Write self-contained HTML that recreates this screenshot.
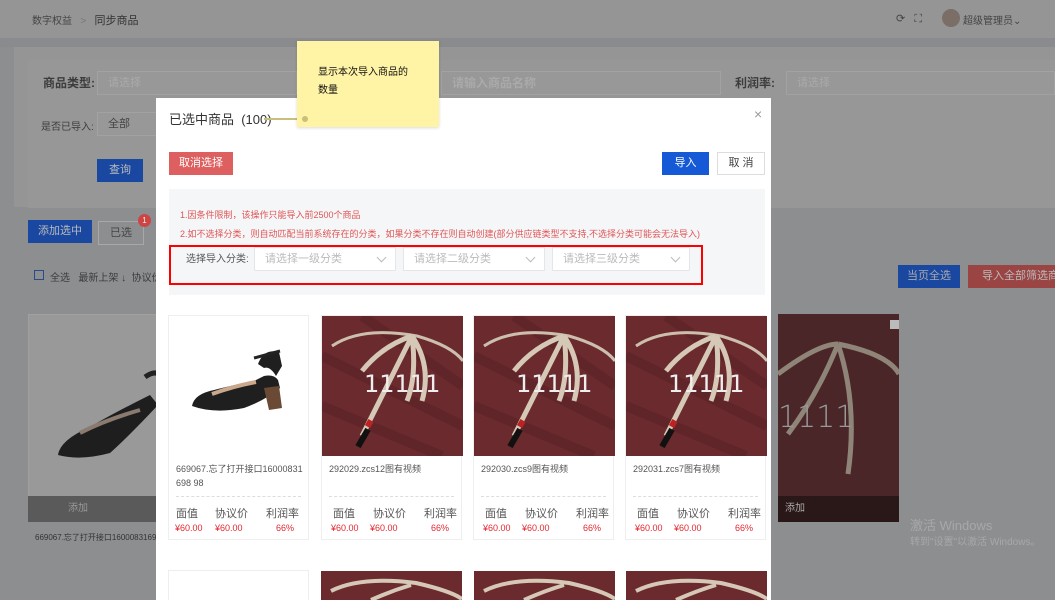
<!DOCTYPE html>
<html><head><meta charset="utf-8"><style>
*{box-sizing:border-box;margin:0;padding:0}
body{width:1055px;height:616px;overflow:hidden;background:#fff;font-family:"Liberation Sans","Noto Sans CJK SC",sans-serif;position:relative;font-size:12px}
.a{position:absolute;white-space:nowrap}
.ov{left:0;top:0;width:1055px;height:600px;background:#8d8e90}
.hd{left:0;top:0;width:1055px;height:38px;background:#959595}
.inp{background:#989898;border:1px solid #a2a2a2;color:#aaa;font-size:11px;padding-left:10px;line-height:22px}
.g{color:#3c3c3c}
.modal{left:156px;top:98px;width:615px;height:502px;background:#fff;overflow:hidden}
.btn{text-align:center;color:#fff;font-size:11px;line-height:23px}
.sel{background:#fff;border:1px solid #e4e6ea;color:#bbb;font-size:11px;line-height:22px;padding-left:10px;height:24px}
.sel:after{content:"";position:absolute;right:10px;top:6px;width:6px;height:6px;border-right:1px solid #bbb;border-bottom:1px solid #bbb;transform:rotate(45deg)}
.card{width:141px;height:225px;border:1px solid #eee;background:#fff}
.card .t{position:absolute;left:7px;top:146px;width:128px;font-size:9px;color:#555;line-height:14px;word-break:break-all;white-space:normal}
.card .dl{position:absolute;left:7px;right:7px;top:180px;border-top:1px dashed #ddd}
.card .l{position:absolute;top:189px;font-size:11px;color:#555}
.card .p{position:absolute;top:207px;font-size:9px;color:#e3262f}
</style></head><body>
<div class="a ov"></div>
<div class="a hd"></div>
<div class="a" style="left:32px;top:12px;font-size:10px;color:#444">数字权益 &nbsp;&nbsp;<span style="color:#777">&gt;</span>&nbsp;&nbsp; <span style="font-size:11px;color:#333">同步商品</span></div>
<div class="a" style="left:896px;top:12px;font-size:11px;color:#444">⟳ &nbsp;&nbsp;⛶</div>
<div class="a" style="left:942px;top:9px;width:18px;height:18px;border-radius:50%;background:#7a6e66"></div>
<div class="a" style="left:963px;top:12px;font-size:10px;color:#444">超级管理员⌄</div>
<div class="a" style="left:0;top:38px;width:1055px;height:9px;background:#8a8b8e"></div>
<div class="a" style="left:14px;top:47px;width:1041px;height:160px;background:#959595"></div>
<div class="a" style="left:28px;top:60px;width:1027px;height:148px;background:#979797"></div>
<div class="a g" style="left:43px;top:74px;font-size:12px;font-weight:bold">商品类型:</div>
<div class="a inp" style="left:97px;top:71px;width:200px;height:24px">请选择</div>
<div class="a inp" style="left:441px;top:71px;width:280px;height:24px;font-size:12px;font-weight:bold;color:#aaa">请输入商品名称</div>
<div class="a g" style="left:735px;top:74px;font-weight:bold">利润率:</div>
<div class="a inp" style="left:786px;top:71px;width:269px;height:24px">请选择</div>
<div class="a g" style="left:41px;top:118px;font-size:10px">是否已导入:</div>
<div class="a inp" style="left:97px;top:112px;width:70px;height:24px;color:#444">全部</div>
<div class="a btn" style="left:97px;top:159px;width:46px;background:#1a48a0;color:#bbb">查询</div>
<div class="a btn" style="left:28px;top:220px;width:64px;background:#1a48a0;color:#bbb">添加选中</div>
<div class="a" style="left:98px;top:221px;width:46px;height:24px;border:1px solid #a8a8a8;text-align:center;line-height:22px;color:#444;font-size:11px">已选</div>
<div class="a" style="left:138px;top:214px;width:13px;height:13px;border-radius:50%;background:#c44;color:#eee;font-size:8px;text-align:center;line-height:13px">1</div>
<div class="a" style="left:34px;top:270px;width:10px;height:10px;border:1px solid #2a4a8a"></div>
<div class="a g" style="left:50px;top:269px;font-size:10px">全选 &nbsp; 最新上架 ↓ &nbsp;协议价</div>
<div class="a btn" style="left:898px;top:265px;width:62px;background:#1a48a0;color:#aaa">当页全选</div>
<div class="a btn" style="left:968px;top:265px;width:87px;background:#9a4444;color:#bbb;text-align:left;padding-left:14px;overflow:hidden">导入全部筛选商品</div>
<!-- bg cards -->
<div class="a" style="left:28px;top:314px;width:130px;height:208px;background:#999;border:1px solid #a0a0a0"></div>
<svg class="a" style="left:50px;top:365px" width="110" height="100"><path d="M8 90 Q10 75 40 62 Q60 50 100 30 L108 40 Q80 70 60 88 Q30 96 8 90Z" fill="#1e1e1e"/><path d="M30 68 Q55 55 90 45" stroke="#8a7a70" stroke-width="4" fill="none"/><path d="M95 12 Q105 5 110 10" stroke="#222" stroke-width="5" fill="none"/></svg>
<div class="a" style="left:28px;top:496px;width:130px;height:26px;background:#5a5a5a;color:#999;font-size:10px;line-height:26px;padding-left:40px">添加</div>
<div class="a" style="left:35px;top:532px;font-size:8px;color:#333">669067.忘了打开接口16000831690</div>
<div class="a" style="left:778px;top:314px;width:121px;height:208px;background:#452527;overflow:hidden">
<svg width="121" height="208"><rect width="121" height="208" fill="#4a2628"/><path d="M0 60 Q40 30 60 30 M60 30 Q40 80 10 120 M60 30 Q80 90 70 160 M60 30 Q110 40 121 60" stroke="#8f8478" stroke-width="5" fill="none"/><rect x="112" y="6" width="9" height="9" fill="#bbb"/></svg>
<div class="a" style="left:0;top:86px;font-size:30px;color:#999;font-family:'DejaVu Sans';font-weight:300">1111</div>
<div class="a" style="left:0;top:182px;width:121px;height:26px;background:#2a1718;color:#aaa;font-size:10px;line-height:26px;padding-left:7px">添加</div>
</div>
<div class="a" style="left:910px;top:515px;font-size:13px;color:#a8a8a8">激活 Windows</div>
<div class="a" style="left:910px;top:533px;font-size:10px;color:#a8a8a8">转到"设置"以激活 Windows。</div>
<!-- modal -->
<div class="a modal">
<div class="a" style="left:13px;top:11px;font-size:13px;color:#333">已选中商品 &nbsp;(100)</div>
<div class="a" style="left:598px;top:8px;font-size:14px;color:#999">×</div>
<div class="a btn" style="left:13px;top:54px;width:64px;background:#dd5f5f">取消选择</div>
<div class="a btn" style="left:506px;top:54px;width:47px;background:#1559d6">导入</div>
<div class="a btn" style="left:561px;top:54px;width:48px;background:#fff;border:1px solid #ddd;color:#444;line-height:21px">取 消</div>
<div class="a" style="left:13px;top:91px;width:596px;height:106px;background:#f5f6f8"></div>
<div class="a" style="left:24px;top:110px;font-size:9px;color:#e05555">1.因条件限制，该操作只能导入前2500个商品</div>
<div class="a" style="left:24px;top:129px;font-size:9px;color:#e05555">2.如不选择分类，则自动匹配当前系统存在的分类，如果分类不存在则自动创建(部分供应链类型不支持,不选择分类可能会无法导入)</div>
<div class="a" style="left:13px;top:147px;width:534px;height:40px;border:2px solid #f00"></div>
<div class="a" style="left:30px;top:155px;font-size:10px;color:#555;line-height:14px">选择导入分类:</div>
<div class="a sel" style="left:98px;top:149px;width:142px">请选择一级分类</div>
<div class="a sel" style="left:247px;top:149px;width:142px">请选择二级分类</div>
<div class="a sel" style="left:396px;top:149px;width:138px">请选择三级分类</div>
</div>
<!-- modal cards -->
<div class="a card" style="left:168px;top:315px">
<svg class="a" style="left:15px;top:30px" width="115" height="70"><path d="M8 60 Q10 48 30 44 Q45 40 70 35 L80 30 Q90 28 94 34 L96 42 Q80 55 60 62 Q30 68 8 60Z" fill="#1f1f1f"/><path d="M28 48 Q50 40 72 36" stroke="#c9a88c" stroke-width="4" fill="none"/><path d="M74 18 Q80 2 95 6 L98 20 L92 30 Q86 20 80 22Z" fill="#1f1f1f"/><path d="M80 42 L95 40 L98 62 L85 64Z" fill="#6a4a34"/><path d="M70 12 L96 5" stroke="#222" stroke-width="3"/></svg>
<div class="t">669067.忘了打开接口16000831698 98</div><div class="dl"></div>
<div class="l" style="left:7px">面值</div><div class="l" style="left:46px">协议价</div><div class="l" style="left:97px">利润率</div>
<div class="p" style="left:6px">¥60.00</div><div class="p" style="left:46px">¥60.00</div><div class="p" style="left:107px">66%</div>
</div>
<div class="a card" style="left:321px;top:315px"><svg class="a" style="left:0;top:0" width="141" height="140"><rect width="141" height="140" fill="#6b2a2e"/><path d="M0 40 L141 110 M0 90 L120 140 M40 0 L141 70" stroke="#5a2226" stroke-width="10" opacity=".6"/><path d="M10 30 Q40 10 95 20 Q130 30 141 45" stroke="#ccbfae" stroke-width="3" fill="none"/><path d="M90 20 Q60 30 40 55 M90 20 Q70 60 50 100 L40 120 M90 20 Q95 60 85 85 M90 20 Q110 50 100 85" stroke="#d6c8b6" stroke-width="5" fill="none"/><rect x="38" y="112" width="6" height="20" fill="#111" transform="rotate(30 41 122)"/><rect x="44" y="104" width="6" height="7" fill="#b22" transform="rotate(30 47 108)"/></svg><div class="a" style="left:42px;top:54px;font-size:24px;color:#eee;font-family:'DejaVu Sans'">11111</div>
<div class="t">292029.zcs12图有视频</div><div class="dl"></div>
<div class="l" style="left:11px">面值</div><div class="l" style="left:51px">协议价</div><div class="l" style="left:102px">利润率</div>
<div class="p" style="left:9px">¥60.00</div><div class="p" style="left:48px">¥60.00</div><div class="p" style="left:109px">66%</div></div>
<div class="a card" style="left:473px;top:315px"><svg class="a" style="left:0;top:0" width="141" height="140"><rect width="141" height="140" fill="#6b2a2e"/><path d="M0 40 L141 110 M0 90 L120 140 M40 0 L141 70" stroke="#5a2226" stroke-width="10" opacity=".6"/><path d="M10 30 Q40 10 95 20 Q130 30 141 45" stroke="#ccbfae" stroke-width="3" fill="none"/><path d="M90 20 Q60 30 40 55 M90 20 Q70 60 50 100 L40 120 M90 20 Q95 60 85 85 M90 20 Q110 50 100 85" stroke="#d6c8b6" stroke-width="5" fill="none"/><rect x="38" y="112" width="6" height="20" fill="#111" transform="rotate(30 41 122)"/><rect x="44" y="104" width="6" height="7" fill="#b22" transform="rotate(30 47 108)"/></svg><div class="a" style="left:42px;top:54px;font-size:24px;color:#eee;font-family:'DejaVu Sans'">11111</div>
<div class="t">292030.zcs9图有视频</div><div class="dl"></div>
<div class="l" style="left:11px">面值</div><div class="l" style="left:51px">协议价</div><div class="l" style="left:102px">利润率</div>
<div class="p" style="left:9px">¥60.00</div><div class="p" style="left:48px">¥60.00</div><div class="p" style="left:109px">66%</div></div>
<div class="a card" style="left:625px;top:315px"><svg class="a" style="left:0;top:0" width="141" height="140"><rect width="141" height="140" fill="#6b2a2e"/><path d="M0 40 L141 110 M0 90 L120 140 M40 0 L141 70" stroke="#5a2226" stroke-width="10" opacity=".6"/><path d="M10 30 Q40 10 95 20 Q130 30 141 45" stroke="#ccbfae" stroke-width="3" fill="none"/><path d="M90 20 Q60 30 40 55 M90 20 Q70 60 50 100 L40 120 M90 20 Q95 60 85 85 M90 20 Q110 50 100 85" stroke="#d6c8b6" stroke-width="5" fill="none"/><rect x="38" y="112" width="6" height="20" fill="#111" transform="rotate(30 41 122)"/><rect x="44" y="104" width="6" height="7" fill="#b22" transform="rotate(30 47 108)"/></svg><div class="a" style="left:42px;top:54px;font-size:24px;color:#eee;font-family:'DejaVu Sans'">11111</div>
<div class="t">292031.zcs7图有视频</div><div class="dl"></div>
<div class="l" style="left:11px">面值</div><div class="l" style="left:51px">协议价</div><div class="l" style="left:102px">利润率</div>
<div class="p" style="left:9px">¥60.00</div><div class="p" style="left:48px">¥60.00</div><div class="p" style="left:109px">66%</div></div>
<!-- second row -->
<div class="a" style="left:168px;top:570px;width:141px;height:30px;border:1px solid #eee;border-bottom:none"></div>
<svg class="a" style="left:321px;top:571px" width="141" height="29"><rect width="141" height="29" fill="#6b2a2e"/><path d="M10 20 Q40 5 95 12 Q130 20 141 28 M90 14 Q70 20 50 29" stroke="#d6c8b6" stroke-width="4" fill="none"/></svg>
<svg class="a" style="left:474px;top:571px" width="141" height="29"><rect width="141" height="29" fill="#6b2a2e"/><path d="M10 20 Q40 5 95 12 Q130 20 141 28 M90 14 Q70 20 50 29" stroke="#d6c8b6" stroke-width="4" fill="none"/></svg>
<svg class="a" style="left:626px;top:571px" width="141" height="29"><rect width="141" height="29" fill="#6b2a2e"/><path d="M10 20 Q40 5 95 12 Q130 20 141 28 M90 14 Q70 20 50 29" stroke="#d6c8b6" stroke-width="4" fill="none"/></svg>
<!-- note -->
<div class="a" style="left:264px;top:118px;width:42px;height:2px;background:#c8bf7a"></div>
<div class="a" style="left:297px;top:41px;width:142px;height:86px;background:#fff3a6;box-shadow:0 1px 3px rgba(0,0,0,.15)"></div>
<div class="a" style="left:302px;top:116px;width:6px;height:6px;border-radius:50%;background:#c8bf7a"></div>
<div class="a" style="left:318px;top:64px;font-size:10px;color:#111;line-height:18px">显示本次导入商品的<br>数量</div>
</body></html>
